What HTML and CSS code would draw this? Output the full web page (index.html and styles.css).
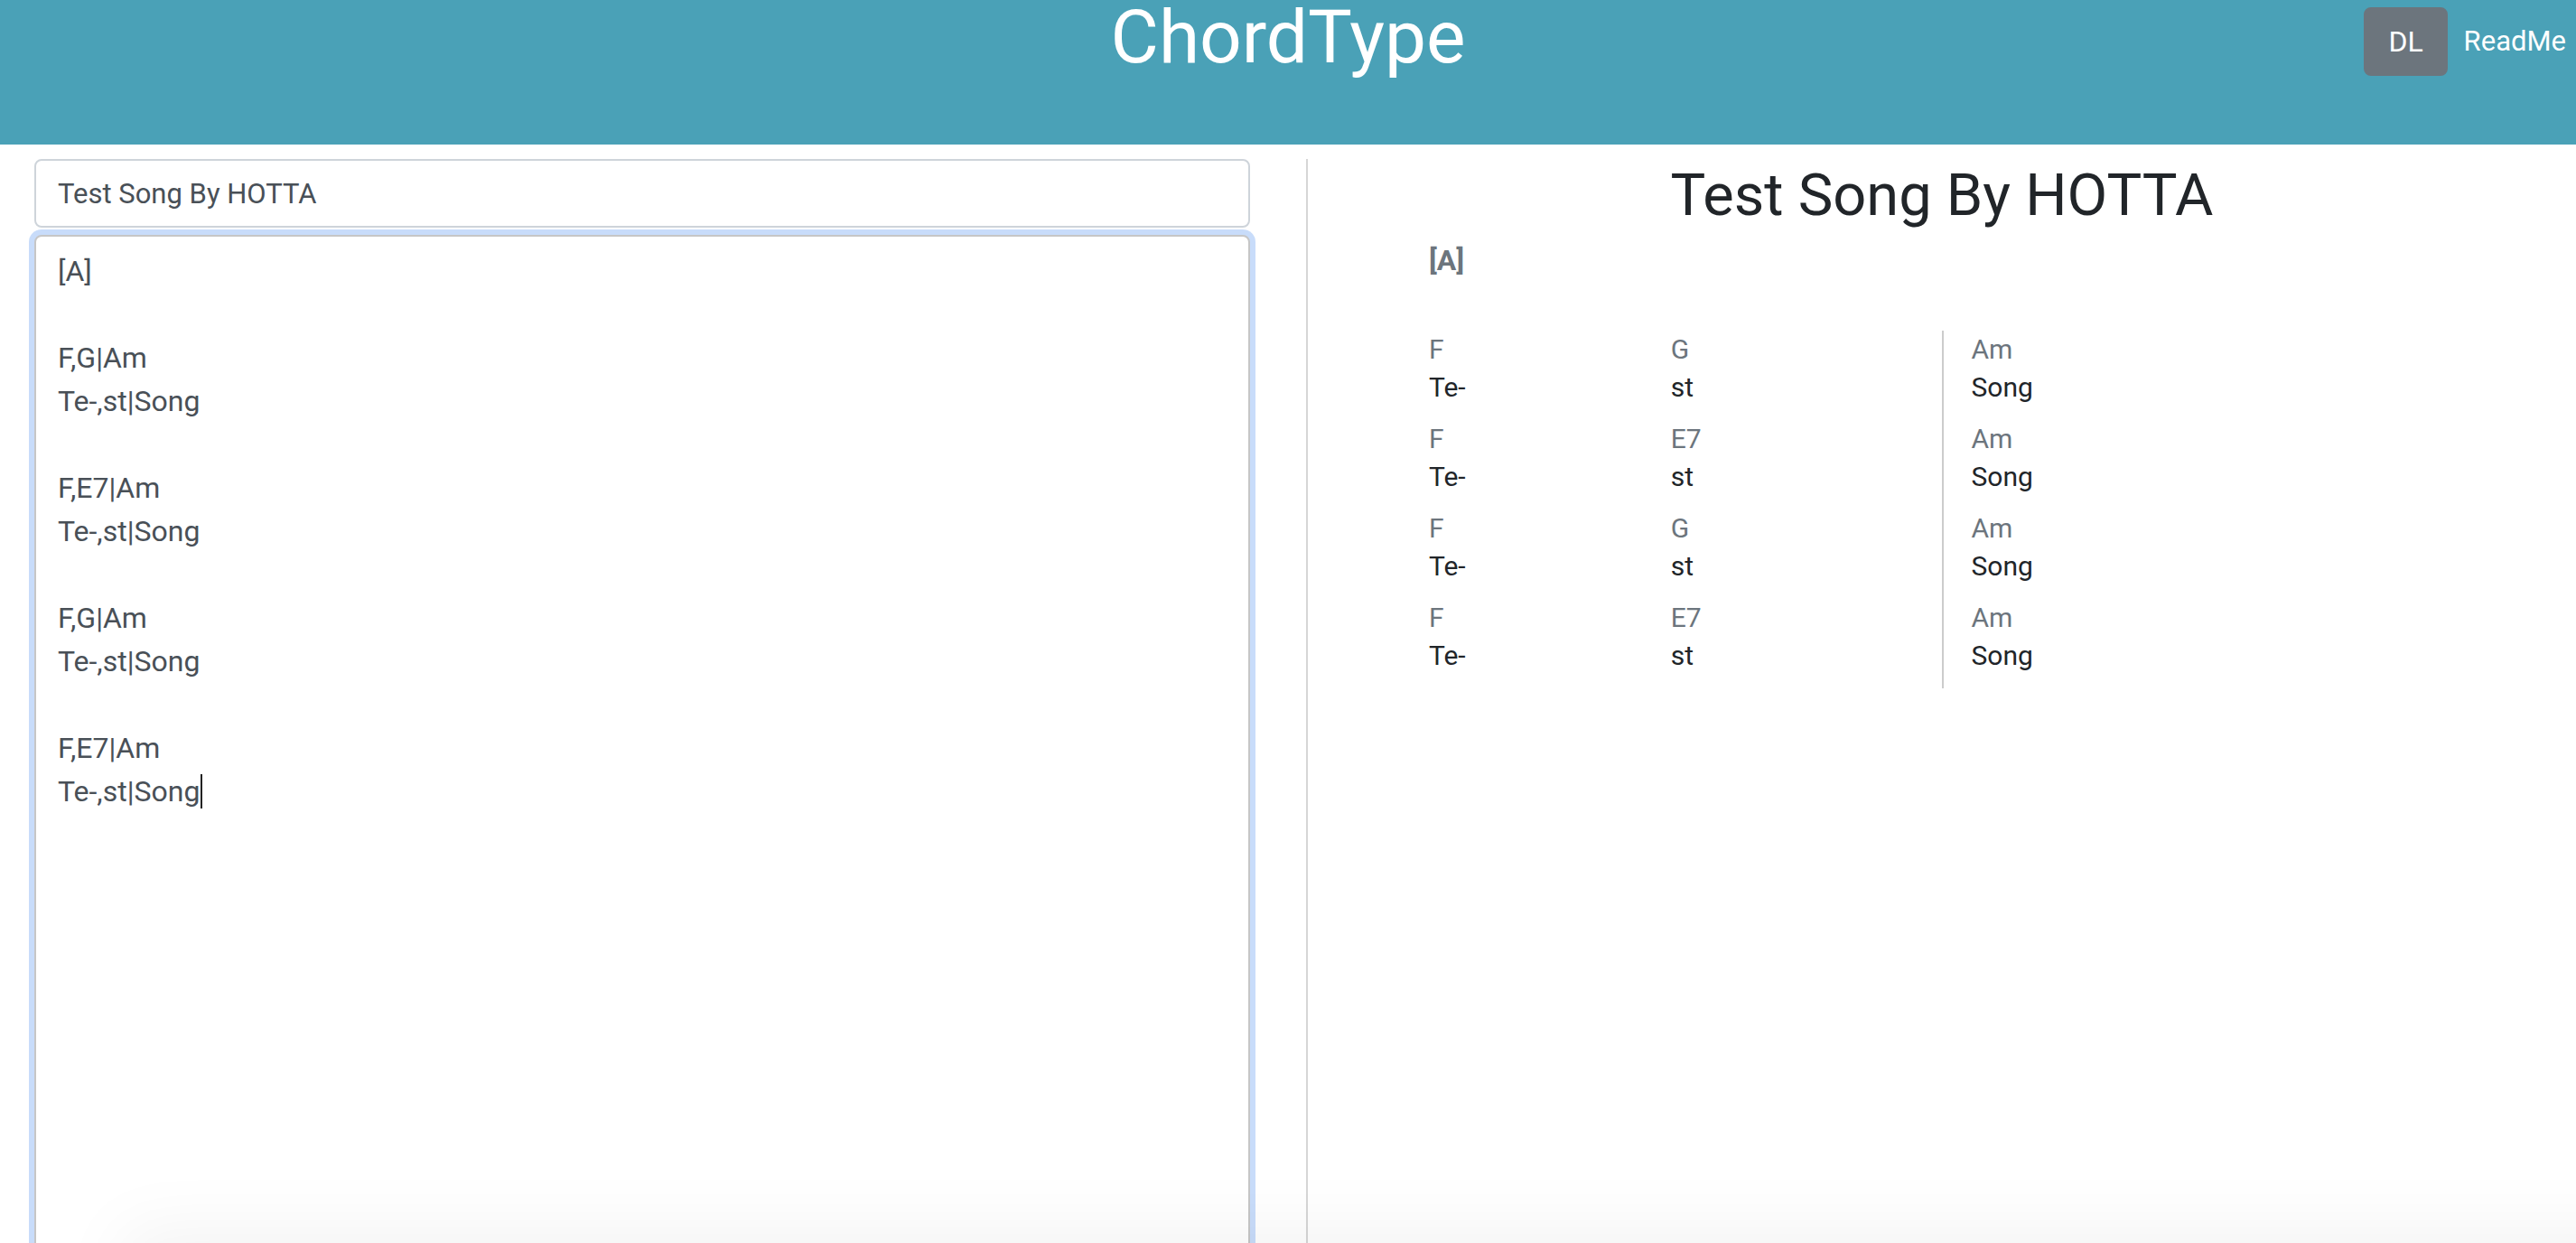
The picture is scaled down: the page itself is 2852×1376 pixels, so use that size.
FILE: index.html
```html
<!DOCTYPE html>
<html lang="en">
<head>
<meta charset="utf-8">
<title>ChordType</title>
<link rel="stylesheet" href="styles.css">
</head>
<body>
<header class="topbar">
  <div class="topbar-side"></div>
  <h1 class="brand">ChordType</h1>
  <div class="actions">
    <button class="btn-dl" type="button">DL</button>
    <a class="readme" href="#">ReadMe</a>
  </div>
</header>
<main class="workspace">
  <section class="editor-pane">
    <input class="title-input" type="text" value="Test Song By HOTTA">
    <div class="editor" role="textbox" aria-multiline="true">[A]

F,G|Am
Te-,st|Song

F,E7|Am
Te-,st|Song

F,G|Am
Te-,st|Song

F,E7|Am
Te-,st|Song<span class="caret"></span></div>
  </section>
  <section class="preview-pane">
    <h2 class="song-title">Test Song By HOTTA</h2>
    <div class="sheet">
      <div class="section-label">[A]</div>
      <div class="line">
        <div class="bar">
          <div class="beat"><div class="chord">F</div><div class="lyric">Te-</div></div>
          <div class="beat"><div class="chord">G</div><div class="lyric">st</div></div>
        </div>
        <div class="bar bar-next">
          <div class="beat"><div class="chord">Am</div><div class="lyric">Song</div></div>
        </div>
      </div>
      <div class="line">
        <div class="bar">
          <div class="beat"><div class="chord">F</div><div class="lyric">Te-</div></div>
          <div class="beat"><div class="chord">E7</div><div class="lyric">st</div></div>
        </div>
        <div class="bar bar-next">
          <div class="beat"><div class="chord">Am</div><div class="lyric">Song</div></div>
        </div>
      </div>
      <div class="line">
        <div class="bar">
          <div class="beat"><div class="chord">F</div><div class="lyric">Te-</div></div>
          <div class="beat"><div class="chord">G</div><div class="lyric">st</div></div>
        </div>
        <div class="bar bar-next">
          <div class="beat"><div class="chord">Am</div><div class="lyric">Song</div></div>
        </div>
      </div>
      <div class="line">
        <div class="bar">
          <div class="beat"><div class="chord">F</div><div class="lyric">Te-</div></div>
          <div class="beat"><div class="chord">E7</div><div class="lyric">st</div></div>
        </div>
        <div class="bar bar-next">
          <div class="beat"><div class="chord">Am</div><div class="lyric">Song</div></div>
        </div>
      </div>
    </div>
  </section>
</main>
<div class="bottom-shade"></div>
</body>
</html>
```

FILE: styles.css
```css
html, body {
  margin: 0;
  padding: 0;
  height: 100%;
  overflow: hidden;
  background: #ffffff;
}

body {
  font-family: Roboto, "Noto Sans", "Liberation Sans", sans-serif;
  color: #212529;
  font-size: 32px;
  line-height: 1.5;
}

/* ---------- header ---------- */
.topbar {
  height: 160px;
  background: #4aa1b7;
  display: grid;
  grid-template-columns: 1fr auto 1fr;
  align-items: start;
}

.brand {
  margin: 0;
  font-size: 82px;
  line-height: 82px;
  font-weight: 400;
  color: #ffffff;
  text-align: center;
}

.actions {
  justify-self: end;
  display: flex;
  align-items: flex-start;
  padding-top: 8px;
  padding-right: 11px;
}

.btn-dl {
  font-family: inherit;
  font-size: 32px;
  line-height: 48px;
  color: #ffffff;
  background: #6c757d;
  border: 2px solid #6c757d;
  border-radius: 8px;
  padding: 12px 25px;
  margin: 0;
}

.readme {
  margin-left: 18px;
  padding-top: 14px;
  font-size: 31px;
  line-height: 48px;
  color: #ffffff;
  text-decoration: none;
}

/* ---------- workspace ---------- */
.workspace {
  display: flex;
  padding-top: 16px;
  height: calc(100vh - 176px);
}

.editor-pane {
  box-sizing: border-box;
  width: 1448px;
  flex: none;
  padding: 0 62px 0 38px;
  border-right: 2px solid #d6d6d6;
}

.title-input {
  display: block;
  box-sizing: border-box;
  width: 100%;
  height: 76px;
  margin: 0;
  padding: 12px 24px;
  font-family: inherit;
  font-size: 31px;
  line-height: 48px;
  color: #495057;
  background: #ffffff;
  border: 2px solid #ced4da;
  border-radius: 8px;
  outline: none;
}

.editor {
  box-sizing: border-box;
  margin-top: 8px;
  height: 1200px;
  padding: 14px 24px;
  font-size: 32px;
  line-height: 48px;
  color: #495057;
  white-space: pre;
  background: #ffffff;
  border: 2px solid #c6c6c6;
  border-radius: 8px;
  box-shadow: 0 0 0 6px #c8dcfa;
}

.caret {
  display: inline-block;
  width: 2px;
  height: 38px;
  margin-left: 1px;
  vertical-align: -8px;
  background: #222222;
}

/* ---------- preview ---------- */
.preview-pane {
  flex: 1;
  min-width: 0;
}

.song-title {
  margin: 2px 0 0;
  font-size: 65px;
  line-height: 76px;
  font-weight: 400;
  text-align: center;
  color: #212529;
}

.sheet {
  width: 1200px;
  margin: 0 auto;
}

.section-label {
  margin-top: 13px;
  padding-left: 32px;
  font-size: 32px;
  line-height: 42px;
  font-weight: 700;
  color: #6c757d;
}

.line {
  display: flex;
}

.section-label + .line {
  margin-top: 57px;
}

.bar {
  flex: 1;
  display: flex;
  padding: 0 32px 15px;
}

.bar-next {
  border-left: 2px solid #cccccc;
  padding-left: 31px;
}

.beat {
  flex: 1;
  font-size: 30px;
  line-height: 42px;
}

.chord {
  color: #6c757d;
}

.lyric {
  color: #212529;
}

/* soft shadow at the bottom of the viewport */
.bottom-shade {
  position: fixed;
  top: 100vh;
  left: 150px;
  width: 3200px;
  height: 200px;
  box-shadow: 0 0 80px 14px rgba(0, 0, 0, 0.05);
  pointer-events: none;
}
```
